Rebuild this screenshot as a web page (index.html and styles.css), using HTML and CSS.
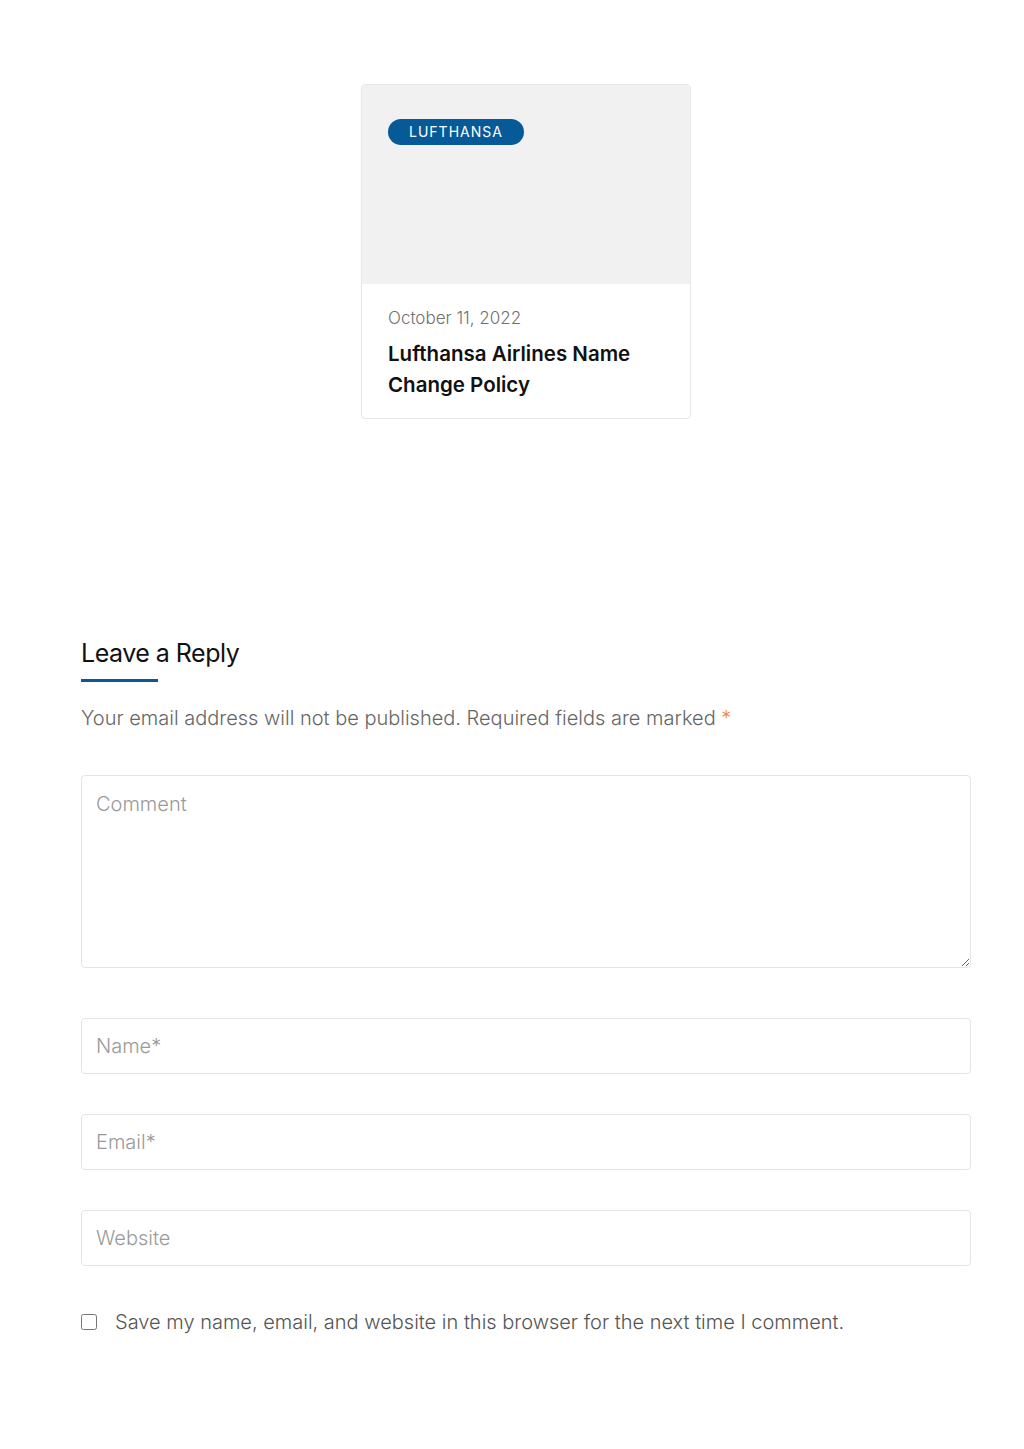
FILE: index.html
```html
<!DOCTYPE html>
<html lang="en">
<head>
    <meta charset="UTF-8">
    <meta name="viewport" content="width=device-width, initial-scale=1.0">
    <title>Lufthansa Airlines Name Change Policy</title>
    <link rel="stylesheet" href="styles.css">
</head>
<body>
    <div class="page">
        <!-- related post -->
        <div class="related">
            <div class="post-card">
                <div class="post-thumb">
                    <span class="badge">LUFTHANSA</span>
                </div>
                <div class="post-body">
                    <p class="post-date">October 11, 2022</p>
                    <h3 class="post-title">Lufthansa Airlines Name Change Policy</h3>
                </div>
            </div>
        </div>

        <!-- comment form -->
        <div class="respond">
            <h2 class="reply-title">Leave a Reply</h2>
            <p class="notes">Your email address will not be published. Required fields are marked <span class="required">*</span></p>
            <form class="comment-form">
                <textarea class="field field-comment" placeholder="Comment"></textarea>
                <input class="field" type="text" placeholder="Name*">
                <input class="field" type="email" placeholder="Email*">
                <input class="field" type="url" placeholder="Website">
                <label class="consent">
                    <input type="checkbox">
                    <span>Save my name, email, and website in this browser for the next time I comment.</span>
                </label>
            </form>
        </div>
    </div>
</body>
</html>
```

FILE: styles.css
```css
body {
    margin: 0;
    font-family: 'Inter', 'Noto Sans', sans-serif;
    color: #111;
    background: #fff;
}

.page {
    width: 890px;
    margin: 0 0 0 81px;
    padding-top: 84px;
}

.related {
    display: flex;
    justify-content: center;
}

.post-card {
    width: 328px;
    border: 1px solid #e6e6e6;
    border-radius: 4px;
    overflow: hidden;
    background: #fff;
}

.post-thumb {
    height: 199px;
    background: #f1f1f1;
    padding: 34px 26px 0;
    box-sizing: border-box;
}

.badge {
    display: inline-block;
    background: #075a98;
    color: #fff;
    font-size: 14px;
    letter-spacing: 1px;
    line-height: 26px;
    padding: 0 21px;
    border-radius: 13px;
}

.post-body {
    padding: 24px 26px 18px;
}

.post-date {
    margin: 0 0 10px;
    font-size: 17px;
    color: #707070;
    font-weight: 300;
}

.post-title {
    margin: 0;
    font-size: 20.5px;
    line-height: 31px;
    font-weight: 600;
    color: #111;
}

.respond {
    margin-top: 217px;
}

.reply-title {
    margin: 0;
    font-size: 25px;
    font-weight: 400;
    line-height: 34px;
    letter-spacing: -0.5px;
    color: #111;
    padding-bottom: 12px;
}

.reply-title::after {
    content: "";
    display: block;
    width: 77px;
    height: 3px;
    background: #075a98;
    margin-top: 9px;
}

.notes {
    margin: 12px 0 45px;
    font-size: 20px;
    font-weight: 300;
    color: #666;
}

.required {
    color: #f08a3c;
}

.comment-form {
    display: flex;
    flex-direction: column;
    gap: 40px;
}

.field {
    display: block;
    width: 100%;
    box-sizing: border-box;
    height: 56px;
    border: 1px solid #e4e4e4;
    border-radius: 4px;
    padding: 0 14px;
    font-family: inherit;
    font-size: 20px;
    font-weight: 300;
    color: #333;
    background: #fff;
}

.field::placeholder {
    color: #9a9a9a;
}

.field-comment {
    height: 193px;
    padding: 14px 14px;
    resize: vertical;
    line-height: 28px;
    margin-bottom: 10px;
}

.consent {
    display: flex;
    align-items: center;
    gap: 18px;
    margin-top: 4px;
    font-size: 20px;
    font-weight: 300;
    color: #555;
}

.consent input {
    margin: 0;
    width: 16px;
    height: 16px;
}
```
